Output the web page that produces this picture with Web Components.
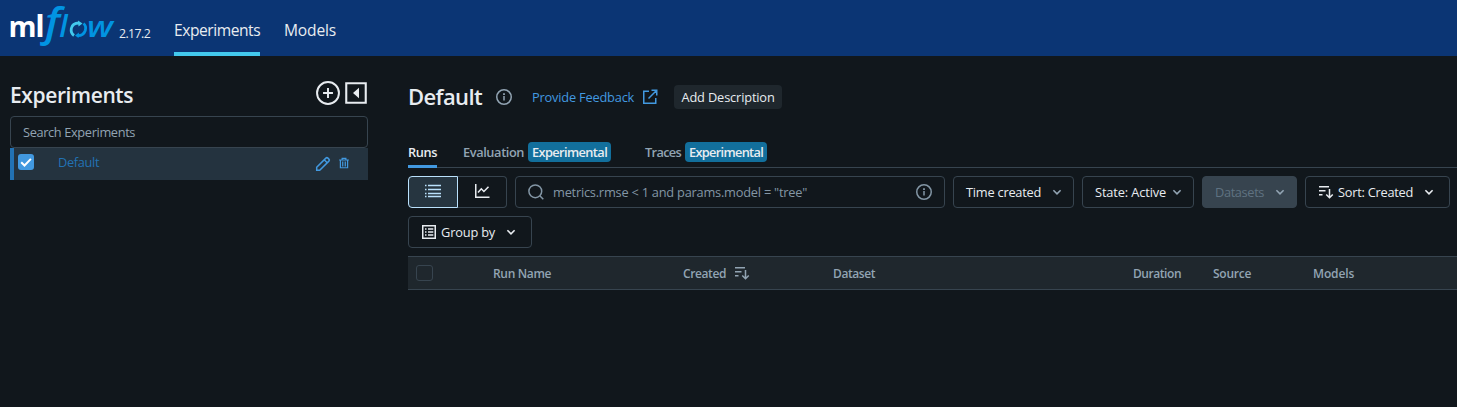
<!DOCTYPE html>
<html lang="en">
<head>
<meta charset="utf-8">
<title>MLflow</title>
<style>
html,body{margin:0;height:100%;background:#11171c;overflow:hidden}
body{font:400 12.8px/20px "Open Sans","Noto Sans",sans-serif;color:#e8ecf0}
</style>
</head>
<body>
<ml-app></ml-app>
<script>
const define = (name, html, setup) => customElements.define(name, class extends HTMLElement {
  connectedCallback() {
    if (!this.shadowRoot) {
      const t = document.createElement('template');
      t.innerHTML = html;
      this.attachShadow({mode: 'open'}).append(t.content.cloneNode(true));
    }
    if (setup) setup(this);
  }
});

const ICONS = {
  info: '<circle cx="8" cy="8" r="7.25" fill="none" stroke="currentColor" stroke-width="1.5"/><path d="M7.25 7h1.5v4.5h-1.5zM7.1 4.3h1.8V6H7.1z" fill="currentColor"/>',
  search: '<circle cx="7.3" cy="7.3" r="6.4" fill="none" stroke="currentColor" stroke-width="1.5"/><path d="m11.8 11.8 3.5 3.5" stroke="currentColor" stroke-width="1.5"/>',
  chevron: '<path d="M4.4 6.3 8 9.9l3.6-3.6" fill="none" stroke="currentColor" stroke-width="1.6"/>',
  external: '<path d="M7 2.25H1.75v12h12V9M9.5 1.25h5.25V6.500M14.500 1.500 6.500 9.500" fill="none" stroke="currentColor" stroke-width="1.5"/>',
  sort: '<path d="M1 2.750h10M1 6.750h6.500M1 10.750h3.500M11.500 5v9M8.250 10.500l3.250 3.250 3.250-3.250" fill="none" stroke="currentColor" stroke-width="1.500"/>',
  list: '<path d="M3 1.500h13M3 5.500h13M3 9.500h13M3 12.500h13M0 1.500h1.500M0 5.500h1.500M0 9.500h1.500M0 12.500h1.500" stroke="currentColor" stroke-width="1.400" fill="none"/>',
  chart: '<path d="M1.750 0v13.250H15.500M4 8.500l3.300-3.700 2.600 2.700 4.600-4.700" fill="none" stroke="currentColor" stroke-width="1.500"/>',
  group: '<path d="M1.750 1.750h12.500v12.500H1.750zM4 5h1.500M4 8h1.500M4 11h1.500M7 5h5.300M7 8h5.300M7 11h5.300" fill="none" stroke="currentColor" stroke-width="1.500"/>',
  plus: '<circle cx="8" cy="8" r="7.300" fill="none" stroke="currentColor" stroke-width="1.300"/><path d="M8 4.700v6.600M4.700 8h6.600" stroke="currentColor" stroke-width="1.300"/>',
  collapse: '<path d="M1.500 1.500h13v13h-13z" fill="none" stroke="currentColor" stroke-width="1.400"/><path d="M10 4.500v7L6 8z" fill="currentColor"/>',
  pencil: '<path d="m1.700 11.300 9.200-9.200q1-1 2 0l1 1q1 1 0 2L4.700 14.300H1.700zM9.200 3.800l3 3" fill="none" stroke="currentColor" stroke-width="1.500"/>',
  trash: '<path d="M1.500 4h13M5.500 4V1.700h5V4M3.200 4v10.300h9.600V4M6.300 6v6.500M9.700 6v6.500" fill="none" stroke="currentColor" stroke-width="1.600"/>',
  check: '<path d="m3.200 8.200 3.300 3.300 6.400-6.600" fill="none" stroke="currentColor" stroke-width="2"/>'
};

define('ml-icon', '<style>:host{display:block;flex:none;width:16px;height:16px}svg{display:block;width:100%;height:100%}</style><svg viewBox="0 0 16 16"></svg>',
  el => { el.shadowRoot.querySelector('svg').innerHTML = ICONS[el.getAttribute('name')]; });

define('ml-logo', `<style>:host{display:block;width:108px;height:56px}svg{display:block;overflow:visible}text{font-family:"Open Sans",sans-serif}</style>
<svg width="108" height="56" viewBox="0 0 108 56">
<g fill="#fff" font-weight="700"><text x="-.5" y="37" font-size="28" textLength="28" lengthAdjust="spacingAndGlyphs">m</text>
<text x="26.200" y="37" font-size="31">l</text></g>
<g fill="#0194e2" font-style="italic">
<text x="36" y="36" font-size="39.500" font-weight="600" textLength="15" lengthAdjust="spacingAndGlyphs">f</text>
<text x="50.200" y="37" font-size="30.500" font-weight="600">l</text>
<text x="78" y="37" font-size="28.500" font-weight="600" textLength="26" lengthAdjust="spacingAndGlyphs">w</text></g>
<path d="M65 35.500Q61.500 33 62.300 28.500 63.500 23 70 23" fill="none" stroke="#43c9ed" stroke-width="2.800"/>
<path d="m69 20.500 4.500 3-4 3z" fill="#43c9ed"/>
<path d="M74.500 23.500Q77.600 26 76.300 30.500 74.500 35.700 69 35.700" fill="none" stroke="#0194e2" stroke-width="2.800"/>
<path d="m70 32.500-4 3 3.500 2.500z" fill="#0194e2"/>
</svg>`);

define('ml-header', `<style>:host{display:flex;height:56px;background:#0b3574;box-sizing:border-box;padding-left:9px;--dy:1px}
.v{margin:23px 0 0 2px;font-size:12.300px}nav{display:flex;gap:24px;margin-left:24px;font-size:15.600px}
a{display:block;box-sizing:border-box;height:56px;padding-top:19px}a.on{border-bottom:4px solid #43c9ed}</style>
<ml-logo></ml-logo><fit-text class="v" w="31">2.17.2</fit-text>
<nav><a class="on"><fit-text w="86">Experiments</fit-text></a><a><fit-text w="52">Models</fit-text></a></nav>`);

define('ml-checkbox', `<style>:host{display:block;box-sizing:border-box;width:16px;height:16px;border:1px solid #37444f;border-radius:3px}
:host([checked]){background:#4299e0;border:0;color:#fff}:host(:not([checked])) ml-icon{display:none}</style><ml-icon name="check"></ml-icon>`);

define('ml-sidebar', `<style>:host{display:block;width:358px;padding:24px 0 0 10px;flex:none}
.h{display:flex;align-items:flex-start;height:36px;font-size:21px;font-weight:600;line-height:30px}
.h ml-icon{width:24px;height:24px;margin-top:1px}.plus{margin-left:183px}.h .col{margin-left:4px}
.s{box-sizing:border-box;height:32px;border:1px solid #37444f;border-radius:4px;padding:5px 12px;color:#92a4b3}
.r{display:flex;box-sizing:border-box;height:32px;background:#24333f;border-left:4px solid #2272b4;padding-left:4px;color:#2272b4}
.r ml-checkbox{margin-top:6px}.r fit-text{margin:4px 0 0 24px}.r ml-icon{color:#4299e0}
.p{margin:8px 0 0 216px}.t{width:12px!important;margin:9px 0 0 7px;height:12px!important}</style>
<div class="h"><fit-text w="123">Experiments</fit-text><ml-icon class="plus" name="plus"></ml-icon><ml-icon class="col" name="collapse"></ml-icon></div>
<div class="s"><fit-text w="112">Search Experiments</fit-text></div>
<div class="r"><ml-checkbox checked></ml-checkbox><fit-text w="41">Default</fit-text><ml-icon class="p" name="pencil"></ml-icon><ml-icon class="t" name="trash"></ml-icon></div>`);

define('ml-title', `<style>:host{display:flex;align-items:center;height:26px;margin-top:28px}
.n{font-size:22px;font-weight:600;line-height:30px;--dy:-1px}.i{margin-left:14px;color:#92a4b3}.f{margin-left:20px;color:#4299e0}.e{margin-left:8px;color:#4299e0}
.b{display:flex;align-items:center;height:24px;margin-left:16px;padding:0 7.500px;border-radius:4px;background:#1f272d}</style>
<fit-text class="n" w="74">Default</fit-text><ml-icon class="i" name="info"></ml-icon><fit-text class="f" w="102">Provide Feedback</fit-text><ml-icon class="e" name="external"></ml-icon><div class="b"><fit-text w="93">Add Description</fit-text></div>`);

define('ml-badge', '<style>:host{display:block;box-sizing:border-box;height:20px;border-radius:4px;background:#126f9c;color:#e8ecf0;padding:0 4px}</style><slot></slot>');

define('ml-tabs', `<style>:host{display:flex;box-sizing:border-box;height:36px;margin-top:22px;border-bottom:1px solid #37444f;font-weight:600;color:#92a4b3}
div{display:flex;box-sizing:border-box;height:36px;padding-top:10px;gap:4px}.on{color:#e8ecf0;border-bottom:3px solid #4299e0;margin-right:26px}.ev{margin-right:34px}</style>
<div class="on"><fit-text w="29">Runs</fit-text></div><div class="ev"><fit-text w="61">Evaluation</fit-text><ml-badge><fit-text w="75">Experimental</fit-text></ml-badge></div><div><fit-text w="36">Traces</fit-text><ml-badge><fit-text w="74">Experimental</fit-text></ml-badge></div>`);

define('ml-button', `<style>:host{display:flex;align-items:center;box-sizing:border-box;height:32px;border:1px solid #37444f;border-radius:4px;padding:0 12px;--chev:#92a4b3}
:host([bright]){--chev:#e8ecf0}:host([disabled]){background:#37444f;color:#5f7281}
.c{margin-left:auto;color:var(--chev)}</style><slot></slot><ml-icon class="c" name="chevron"></ml-icon>`);

define('ml-toolbar', `<style>:host{display:flex;flex-wrap:wrap;gap:8px;margin-top:8px}
.seg{display:flex;width:99px;height:32px}.seg div{box-sizing:border-box;border:1px solid #37444f;display:flex;align-items:center;justify-content:center}
.seg .a{width:50px;border-color:#bae1fc;background:#263540;color:#bae1fc;border-radius:4px 0 0 4px}.seg .z{width:49px;border-left:0;border-radius:0 4px 4px 0}
.q{box-sizing:border-box;display:flex;align-items:center;width:430px;height:32px;border:1px solid #37444f;border-radius:4px;padding:0 12px;color:#8396a5}
.q fit-text{margin-left:9px}.q .i{margin-left:auto}.so{margin-right:4px}</style>
<div class="seg"><div class="a"><ml-icon name="list"></ml-icon></div><div class="z"><ml-icon name="chart"></ml-icon></div></div>
<div class="q"><ml-icon name="search"></ml-icon><fit-text w="254">metrics.rmse &lt; 1 and params.model = "tree"</fit-text><ml-icon class="i" name="info"></ml-icon></div>
<ml-button style="width:121px;padding-right:8px"><fit-text w="75">Time created</fit-text></ml-button>
<ml-button style="width:112px;padding-right:8px"><fit-text w="71">State: Active</fit-text></ml-button>
<ml-button disabled style="width:95px;padding-right:8px"><fit-text w="49">Datasets</fit-text></ml-button>
<ml-button bright style="width:145px"><ml-icon class="so" name="sort"></ml-icon><fit-text w="75">Sort: Created</fit-text></ml-button>
<ml-button bright style="width:124px"><ml-icon class="so" name="group"></ml-icon><fit-text w="54">Group by</fit-text></ml-button>`);

define('ml-table', `<style>:host{display:grid;grid-template-columns:85px 190px 150px 300px 80px 100px 1fr;align-items:center;box-sizing:border-box;height:34px;margin-top:8px;background:#1f272d;border:solid #37444f;border-width:1px 0;color:#92a4b3;font-size:12px;font-weight:600;--dy:1px}
ml-checkbox{margin-left:8px;width:17px}.c{display:flex;gap:8px;align-items:center}</style>
<ml-checkbox></ml-checkbox><fit-text w="58">Run Name</fit-text><div class="c"><fit-text w="43">Created</fit-text><ml-icon name="sort"></ml-icon></div><fit-text w="42">Dataset</fit-text><fit-text w="48">Duration</fit-text><fit-text w="38">Source</fit-text><fit-text w="41">Models</fit-text>`);

define('ml-app', `<style>:host{display:block}.b{display:flex}main{margin-left:40px;flex:1;min-width:0}</style>
<ml-header></ml-header><div class="b"><ml-sidebar></ml-sidebar><main><ml-title></ml-title><ml-tabs></ml-tabs><ml-toolbar></ml-toolbar><ml-table></ml-table></main></div>`);

/* A label that spreads its letters evenly over the width in its "w" attribute. */
define('fit-text', '<style>:host{display:block;flex:none;white-space:nowrap;transform:translateY(var(--dy,0px))}</style><slot></slot>', el => {
  const w = +el.getAttribute('w'), s = el.textContent;
  const ctx = document.createElement('canvas').getContext('2d');
  const cs = getComputedStyle(el);
  ctx.font = `${cs.fontWeight} ${cs.fontSize} ${cs.fontFamily}`;
  el.style.width = w + 'px';
  el.style.letterSpacing = ((w + .1 - ctx.measureText(s).width) / s.length).toFixed(3) + 'px';
});
</script>
</body>
</html>
